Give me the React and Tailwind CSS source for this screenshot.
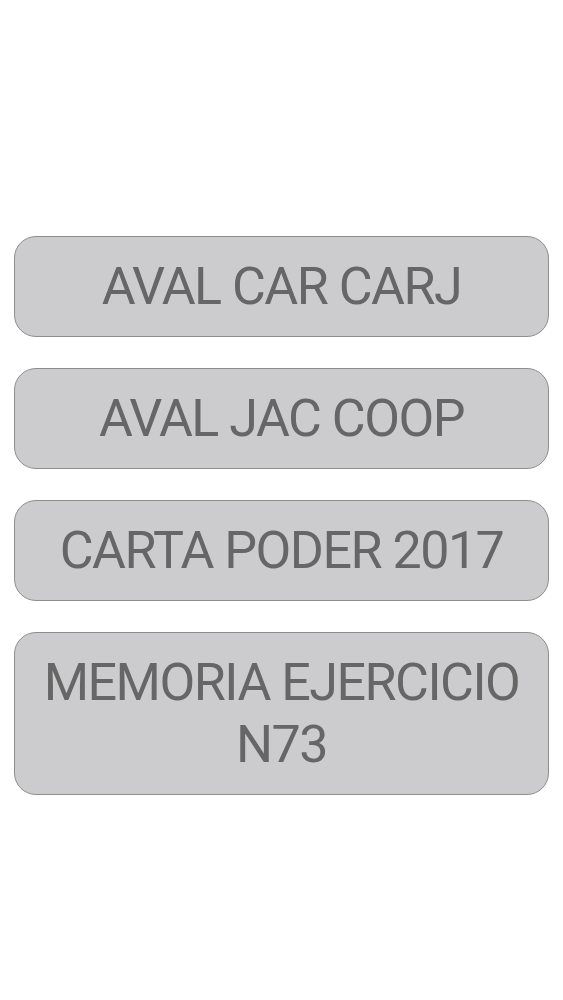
export default function App() {
  const items = ['AVAL CAR CARJ', 'AVAL JAC COOP', 'CARTA PODER 2017', 'MEMORIA EJERCICIO N73'];

  return (
    <div className="min-h-screen bg-white px-[14px] pt-[236px]" style={{ fontFamily: 'Roboto, "Noto Sans", sans-serif' }}>
      <div className="flex flex-col gap-[31px] w-[535px]">
        {items.map((label) => (
          <button
            key={label}
            className="w-full bg-[#cccbce] border border-[#8e8e8e] rounded-[22px] py-[18.5px] px-[8px] text-[52px] leading-[62px] tracking-[-1.5px] text-[#666666] text-center"
          >
            {label}
          </button>
        ))}
      </div>
    </div>
  );
}
